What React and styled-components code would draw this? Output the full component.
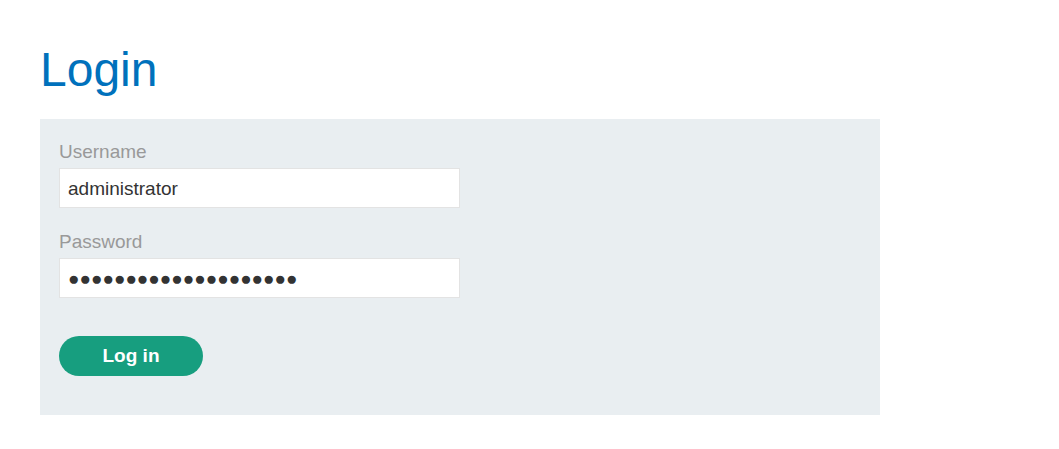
import styled, { createGlobalStyle } from "styled-components";

const GlobalStyle = createGlobalStyle`
  body {
    margin: 0;
    background: #ffffff;
    font-family: "Liberation Sans", Arial, sans-serif;
  }
`;

const MASK = "●".repeat(20);

function App() {
  return (
    <Page>
      <GlobalStyle />
      <Title>Login</Title>
      <Panel>
        <Field>
          <Label htmlFor="username">Username</Label>
          <Input id="username" type="text" defaultValue="administrator" readOnly />
        </Field>
        <Field>
          <Label htmlFor="password">Password</Label>
          <Input id="password" type="text" defaultValue={MASK} readOnly />
        </Field>
        <Button type="button">Log in</Button>
      </Panel>
    </Page>
  );
}

const Page = styled.div`
  padding: 42px 40px 0;
  width: 840px;
`;

const Title = styled.h1`
  margin: 0 0 22px;
  font-size: 48px;
  font-weight: 400;
  line-height: 55px;
  color: #0071bc;
`;

const Panel = styled.form`
  display: flex;
  flex-direction: column;
  align-items: flex-start;
  background-color: #e9eef1;
  padding: 22px 19px 39px;
`;

const Field = styled.div`
  display: flex;
  flex-direction: column;
  margin-bottom: 23px;

  &:last-of-type {
    margin-bottom: 38px;
  }
`;

const Label = styled.label`
  font-size: 19px;
  line-height: 22px;
  color: #999999;
  margin-bottom: 5px;
`;

const Input = styled.input`
  box-sizing: border-box;
  width: 401px;
  height: 40px;
  padding: 2px 8px 0;
  border: 1px solid #e3e3e3;
  background: #ffffff;
  font-family: "Liberation Sans", Arial, sans-serif;
  font-size: 19px;
  color: #333333;
  outline: none;
`;

const Button = styled.button`
  width: 144px;
  height: 40px;
  border: none;
  border-radius: 20px;
  background-color: #179e7f;
  color: #ffffff;
  font-family: "Liberation Sans", Arial, sans-serif;
  font-size: 19px;
  font-weight: 700;
  cursor: pointer;
`;

export default App;
